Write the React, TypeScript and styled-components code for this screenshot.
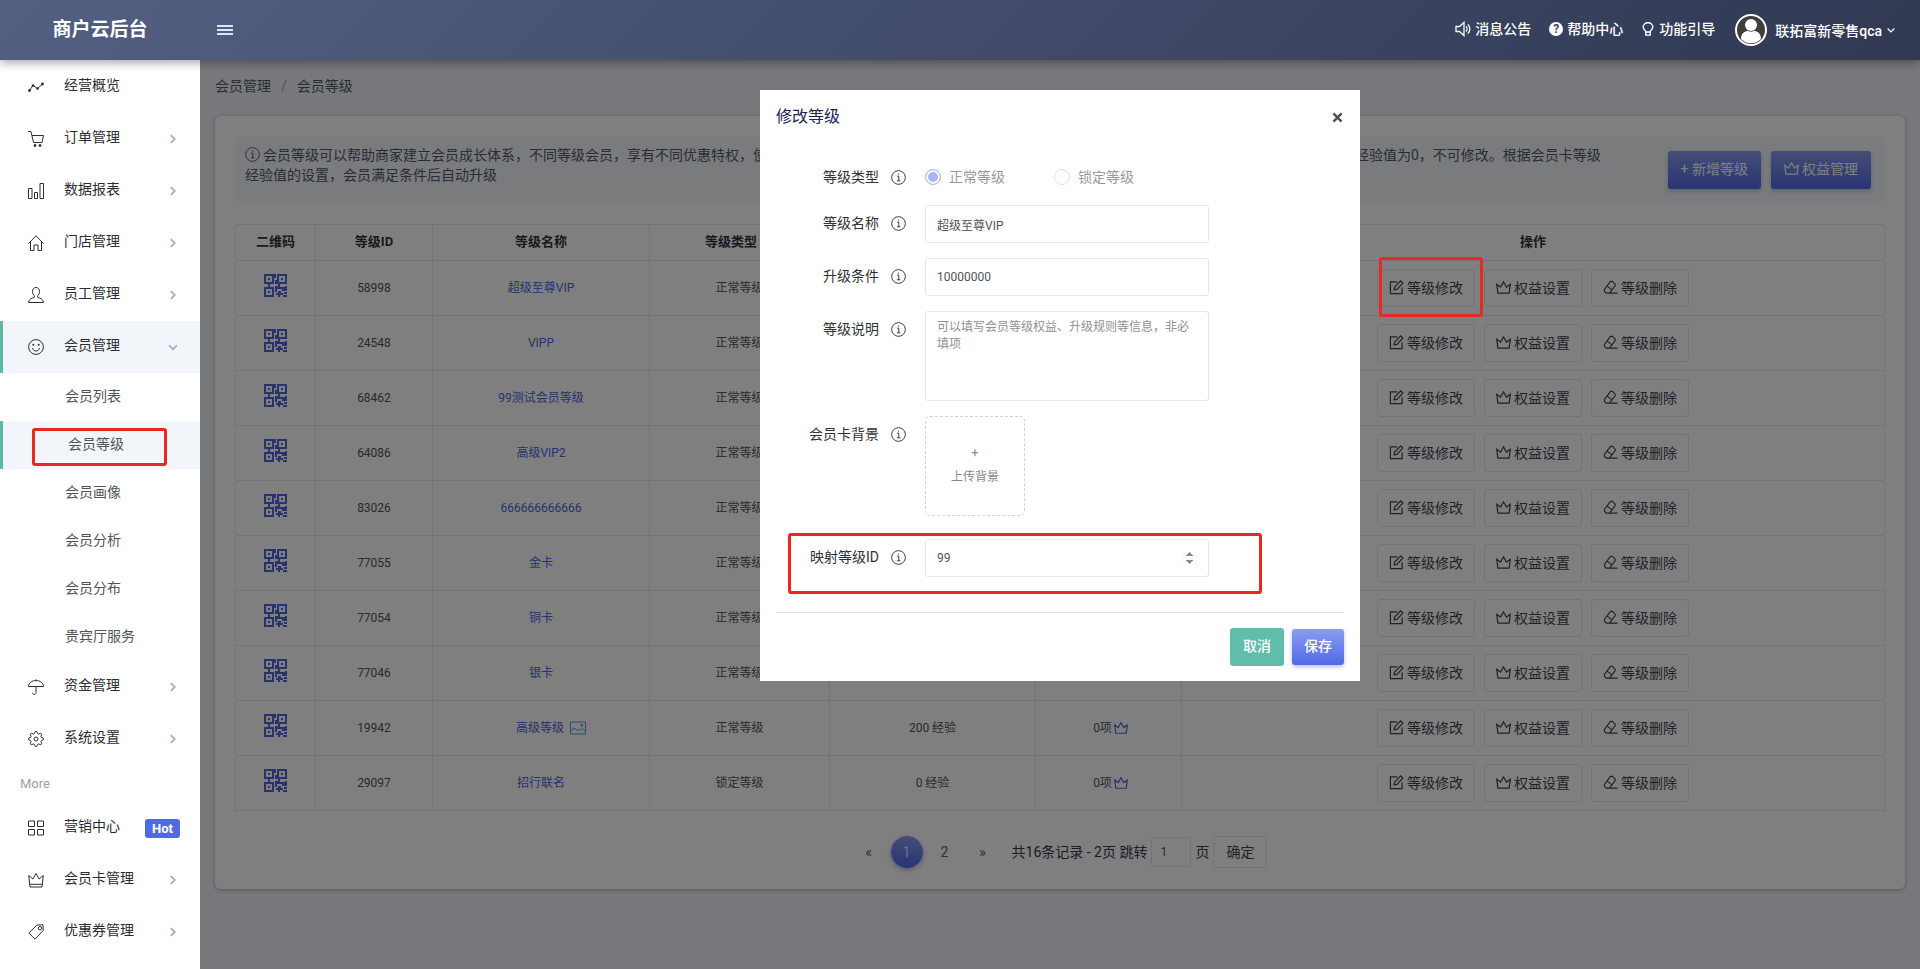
import React from 'react';
import styled, { createGlobalStyle, css } from 'styled-components';

const GlobalStyle = createGlobalStyle`
  *, *::before, *::after { box-sizing: border-box; }
  body {
    margin: 0;
    background: #eff0f6;
    color: #303e50;
    font: 14px/20px Roboto, "Noto Sans CJK SC", sans-serif;
  }
  button, input, textarea { font-family: inherit; }
  a { color: inherit; text-decoration: none; }
  ul { list-style: none; margin: 0; padding: 0; }
`;

/* ---------- icons ---------- */

const Svg = styled.svg`
  display: block;
  flex: none;
  fill: none;
  stroke: currentColor;
`;

/* Cog outline with eight teeth around the centre of a 16 x 16 box. */
const cogPoints = Array.from({ length: 32 }, (_, i) => {
  const angle = ((i - 0.5) * Math.PI) / 16;
  const radius = i % 4 < 2 ? 7.5 : 5.6;
  return `${(8 + radius * Math.sin(angle)).toFixed(2)},${(8 - radius * Math.cos(angle)).toFixed(2)}`;
}).join(' ');

const shapes: Record<string, React.ReactNode> = {
  trend: (
    <>
      <path d="M1.500 11.500 5 6.500l4.500 3L14.500 5" />
      <g fill="currentColor" stroke="none">
        <circle cx="1.500" cy="11.500" r="1.400" />
        <circle cx="5" cy="6.500" r="1.300" />
        <circle cx="9.500" cy="9.500" r="1.300" />
        <circle cx="14.500" cy="5" r="1.400" />
      </g>
    </>
  ),
  cart: (
    <>
      <path d="M0 .5h3l2.500 11h8.500L15.500 4.500H4" />
      <circle cx="7" cy="14.500" r="1" fill="currentColor" />
      <circle cx="12" cy="14.500" r="1" fill="currentColor" />
    </>
  ),
  bars: <path d="M.5 5.500h3.500v10H.5zM6.500 9.500h3v6h-3zM12 .5h3.500v15H12z" />,
  home: <path d="M.5 8.500 8 .8l7.500 7.700M2.500 6.800v8.700h3.500v-5.500h4v5.500h3.500V6.800" />,
  user: (
    <path d="M8 .5C5.600.500 4.500 2.300 4.500 4.500c0 2 .8 3.300 1.800 4.200v1.600C4 11.300.8 12 .5 15.500h15c-.3-3.500-3.500-4.200-5.800-5.200V8.700c1-.9 1.800-2.200 1.800-4.200C11.500 2.300 10.400.5 8 .5z" />
  ),
  smile: (
    <>
      <circle cx="8" cy="8" r="7.400" />
      <path d="M4.500 9c.5 2 1.800 3 3.500 3s3-1 3.500-3" />
      <circle cx="5.300" cy="5.800" r=".6" fill="currentColor" />
      <circle cx="10.700" cy="5.800" r=".6" fill="currentColor" />
    </>
  ),
  umbrella: (
    <path d="M8 .3v1.200M.5 7.500C.5 4 4 1.500 8 1.500s7.500 2.500 7.500 6H.5zM8 7.500v6c0 2.600-3.500 2.600-3.500.3" />
  ),
  gear: (
    <>
      <circle cx="8" cy="8" r="2" />
      <polygon points={cogPoints} />
    </>
  ),
  grid: <path d="M.5 1h6v5.500h-6zM9.500 1h6v5.500h-6zM.5 9.500h6V15h-6zM9.500 9.500h6V15h-6z" />,
  crown: <path d="M.7 3.500 2 15h12l1.300-11.500L11 7 8 1.500 5 7zM2 12.300h12" />,
  simpleCrown: <path d="M.8 4.500 2 14h12l1.200-9.500-4 3L8 2 4.800 7.500z" />,
  tag: (
    <>
      <path d="M9 1 15 .8 15.200 6.500 7 15.200.8 9z" />
      <circle cx="12" cy="4.200" r="1.700" />
    </>
  ),
  speaker: (
    <>
      <path d="M1 5.500v5h3.500L9 14.500v-13L4.500 5.500z" />
      <path d="M11 5.500c1.300 1.300 1.300 3.700 0 5M12.800 3.500c2.800 2.500 2.800 6.500 0 9" />
    </>
  ),
  bulb: <path d="M5.500 11.500C5.500 9.500 2.500 8.800 2.500 5.800a5.500 5 0 0 1 11 0c0 3-3 3.700-3 5.700zM5.500 11.500v3.500h5v-3.500" />,
  info: (
    <>
      <circle cx="8" cy="8" r="7.300" />
      <path d="M6.500 6.500H8.300v5M6.300 11.500h3.700" />
      <circle cx="8" cy="4.300" r=".7" fill="currentColor" stroke="none" />
    </>
  ),
  edit: <path d="M9 2H1.500v12.500H14V8M5.500 10.500l.5-3L12.500 1l2.300 2.200L8.500 10z" />,
  eraser: <path d="M5 14h10.500M8 14H3.500L1.500 12V10L8 1.500h2L13 4.500V6L7 14M4.500 6.500l5 4" />,
  picture: <path d="M.5 2h15v12H.5zM.5 11 4 8l3 2.500 2-1.500M9 11l3-2.500 3.500 3M11 4.500h1.500V6H11z" />,
  right: <path d="M5.500 3.500 10 8l-4.500 4.500" />,
  down: <path d="M3.500 6 8 10.500 12.500 6" />,
  menu: <path d="M0 4h16M0 8h16M0 12h16" />,
  close: <path d="M3 3l10 10M13 3 3 13" />,
};

const Icon = ({ name, size = 16, weight = 1 }: { name: string; size?: number; weight?: number }) => (
  <Svg viewBox="0 0 16 16" width={size} height={size} strokeWidth={weight} aria-hidden>
    {shapes[name]}
  </Svg>
);

const qrCells =
  'M0 0h10v10H0zM2 2v6h6V2zM4 4h2v2H4zM13 0h10v10H13zM15 2v6h6V2zM17 4h2v2h-2zM0 13h10v10H0zM2 15v6h6v-6zM4 17h2v2H4z' +
  'M10 0h2v4h-2zM11 6h2v4h-2zM4 10h2v3H4zM11 12h3v-2h2v3h5v-1h2v5h-5v-2h-5v3h-2zM14 17h3v2h2v2h-3v2h-2v-2h-2v-2h2zM20 18h3v2h-3zM19 21h4v2h-4z';

const QrIcon = () => (
  <svg viewBox="0 0 23 23" width={23} height={23} fill="currentColor" fillRule="evenodd" aria-hidden>
    <path d={qrCells} />
  </svg>
);

/* ---------- top bar ---------- */

const TopBar = styled.header`
  position: sticky;
  top: 0;
  z-index: 50;
  display: flex;
  align-items: center;
  height: 60px;
  padding-right: 23px;
  color: #fff;
  background: linear-gradient(135deg, #536082, #303852);
  box-shadow: 0 2px 10px rgba(0, 0, 0, 0.4);
`;

const Brand = styled.a`
  width: 200px;
  font-size: 19px;
  font-weight: 700;
  text-align: center;
`;

const PlainButton = styled.button`
  display: flex;
  padding: 0;
  border: 0;
  color: inherit;
  background: none;
  cursor: pointer;
`;

const MenuToggle = styled(PlainButton)`
  margin: 0 auto 0 17px;
  color: #dfe4f2;
`;

const TopLink = styled.a`
  display: flex;
  align-items: center;
  gap: 4px;
  margin-right: 18px;
  padding-bottom: 2px;
  font-weight: 500;
`;

const HelpDot = styled.span`
  width: 14px;
  height: 14px;
  border-radius: 50%;
  color: #3a4560;
  background: #fff;
  font-size: 12px;
  font-weight: 700;
  line-height: 14px;
  text-align: center;
`;

const Account = styled(PlainButton)`
  align-items: center;
  gap: 8px;
  margin-left: 2px;
  font-size: 14px;
  font-weight: 500;
`;

const AccountName = styled.span`
  display: flex;
  align-items: center;
  gap: 3px;
`;

const Avatar = () => (
  <svg width="32" height="32" viewBox="0 0 32 32" aria-hidden>
    <circle cx="16" cy="16" r="15" fill="#413d3b" stroke="#fff" strokeWidth="2" />
    <circle cx="16" cy="11" r="6" fill="#fff" />
    <path d="M6 25c0-6 4-8 7-8 2 1 4 1 6 0 3 0 7 2 7 8a14 14 0 0 1-20 0z" fill="#fff" />
  </svg>
);

/* ---------- side menu ---------- */

const Shell = styled.div`
  display: flex;
  min-height: calc(100vh - 60px);
`;

const Sidebar = styled.nav`
  flex: none;
  width: 200px;
  padding-top: 1px;
  background: #fff;
`;

const marker = css`
  background: #f2f6fa;
  border-left-color: #60b9a8;
`;

const MenuLink = styled.a<{ $open?: boolean }>`
  display: flex;
  align-items: center;
  height: 52px;
  padding: 0 20px 0 25px;
  border-left: 3px solid transparent;
  color: #2c2e33;
  ${(p) => p.$open && marker}
`;

const MenuText = styled.span`
  flex: 1;
  margin-left: 20px;
  padding-bottom: 4px;
`;

const MenuArrow = styled.span`
  color: #a6abb3;
`;

const Badge = styled.span`
  padding: 0 7px;
  border-radius: 3px;
  color: #fff;
  background: #506ae4;
  font-size: 13px;
  font-weight: 700;
  line-height: 19px;
`;

const SubItem = styled.li`
  position: relative;
`;

const SubLink = styled.a<{ $current?: boolean }>`
  display: block;
  padding: 0 0 2px 62px;
  border-left: 3px solid transparent;
  color: #50545c;
  line-height: 46px;
  ${(p) => p.$current && marker}
  ${(p) => p.$current && 'padding-left: 65px;'}
`;

const MenuCaption = styled.div`
  padding-left: 20px;
  color: #98a2ac;
  font-size: 13px;
  line-height: 37px;
`;

/* Red frame drawn around the step the reader should follow. */
const Marker = styled.span<{ $inset: string }>`
  position: absolute;
  inset: ${(p) => p.$inset};
  z-index: 30;
  border: 3px solid #e8291f;
  border-radius: 3px;
  pointer-events: none;
`;

/* ---------- page ---------- */

const Main = styled.main`
  position: relative;
  flex: 1;
  min-width: 0;
  padding: 16px 15px;
`;

const Crumbs = styled.nav`
  display: flex;
  gap: 10px;
  margin-bottom: 20px;
  color: #525a66;

  span { color: #a5abb5; }
`;

const Card = styled.section`
  padding: 20px;
  border-radius: 6px;
  background: #fff;
  box-shadow: 0 1px 4px rgba(30, 40, 80, 0.3);
`;

const Notice = styled.div`
  display: flex;
  align-items: flex-start;
  justify-content: space-between;
  gap: 56px;
  margin-bottom: 21px;
  padding: 9px 14px 14px 10px;
  border-radius: 5px;
  background: #f3f6f9;
`;

const NoticeText = styled.p`
  margin: 0 0 4px;
  color: #55596a;

  svg {
    display: inline-block;
    margin-right: 3px;
    vertical-align: -2px;
  }
`;

const NoticeActions = styled.div`
  display: flex;
  flex: none;
  gap: 10px;
  height: 44px;
  padding-top: 6px;
`;

const PrimaryButton = styled.button`
  display: flex;
  align-items: center;
  justify-content: center;
  gap: 3px;
  height: 38px;
  padding: 0 12px 4px;
  border: 0;
  border-radius: 3px;
  color: #fff;
  background: linear-gradient(#8a9bf0, #506ae4);
  box-shadow: 0 2px 4px rgba(80, 106, 228, 0.4);
  font-size: 14px;
  white-space: nowrap;

  ${NoticeActions} & { padding: 0 13px 4px; }
`;

const Table = styled.table`
  width: 100%;
  border-collapse: collapse;
  table-layout: fixed;
  color: #50545a;
  font-size: 12px;
  text-align: center;

  th, td {
    padding: 0;
    border: 1px solid #e6e9ee;
  }
  th {
    height: 36px;
    padding-bottom: 2px;
    color: #303440;
    font-size: 13px;
    font-weight: 700;
  }
  td { height: 55px; }
`;

const HeadCell = styled.span`
  display: inline-flex;
  align-items: center;
  gap: 3px;
`;

const CellLink = styled.a<{ $withPicture?: boolean }>`
  display: inline-flex;
  align-items: center;
  gap: 6px;
  padding-left: ${(p) => (p.$withPicture ? 20 : 0)}px;
  color: #5064d8;

  span + svg { color: #4f9fd0; }
`;

const Perks = styled.span`
  display: inline-flex;
  align-items: center;
  gap: 2px;
  padding-left: 4px;

  svg { color: #5064d8; }
`;

const Actions = styled.div`
  display: flex;
  justify-content: center;
  gap: 9px;
`;

const ActionSlot = styled.div`
  position: relative;
`;

const OutlineButton = styled.button<{ $wide?: boolean }>`
  display: flex;
  align-items: center;
  justify-content: center;
  gap: 3px;
  width: ${(p) => (p.$wide ? 98 : 54)}px;
  height: ${(p) => (p.$wide ? 38 : 32)}px;
  padding: 0 0 2px;
  border: 1px solid #e4e7ef;
  border-radius: 3px;
  color: #42454f;
  background: transparent;
  font-size: 14px;
`;

const Pager = styled.div`
  display: flex;
  align-items: center;
  justify-content: center;
  gap: 4px;
  margin: 25px 0 1px;
  color: #30384c;
`;

const PageLink = styled.a<{ $current?: boolean }>`
  width: 32px;
  margin-right: 2px;
  border-radius: 50%;
  color: #585c66;
  line-height: 32px;
  text-align: center;
  ${(p) =>
    p.$current &&
    css`
      color: #dfe4ff;
      background: linear-gradient(#8a9bf0, #506ae4);
      box-shadow: 0 2px 5px rgba(80, 106, 228, 0.5);
    `}
`;

const PagerLabel = styled.label`
  display: flex;
  align-items: center;
  gap: 4px;
  margin-left: 7px;
`;

const PageInput = styled.input`
  width: 40px;
  height: 30px;
  padding: 0 8px;
  border: 1px solid #e4e7ef;
  border-radius: 3px;
  color: #555;
  background: transparent;
  font-size: 12px;
`;

/* ---------- dialog ---------- */

const Backdrop = styled.div`
  position: absolute;
  inset: 0;
  z-index: 10;
  display: flex;
  align-items: flex-start;
  justify-content: center;
  padding-top: 30px;
  background: rgba(0, 0, 0, 0.5);
`;

const Dialog = styled.form`
  width: 600px;
  padding: 17px 16px 15px;
  background: #fff;
`;

const DialogHead = styled.div`
  display: flex;
  align-items: center;
  justify-content: space-between;
  margin-bottom: 32px;
`;

const DialogTitle = styled.h2`
  margin: 0;
  color: #1c2454;
  font-size: 16px;
  font-weight: 400;
  line-height: 20px;
`;

const DialogClose = styled(PlainButton)`
  color: #505050;
`;

const Field = styled.div<{ $gap?: number }>`
  position: relative;
  display: grid;
  grid-template-columns: 130px auto;
  justify-content: start;
  column-gap: 19px;
  margin-bottom: ${(p) => p.$gap ?? 15}px;
`;

const FieldLabel = styled.label`
  display: flex;
  align-items: center;
  justify-content: flex-end;
  gap: 12px;
  height: 38px;
  padding-bottom: 2px;
  color: #303236;
`;

const Radios = styled.div`
  display: flex;
  align-items: center;
  gap: 49px;
  padding-bottom: 2px;
`;

const RadioLabel = styled.label`
  display: flex;
  align-items: center;
  gap: 8px;
  color: #999;
`;

const Radio = styled.input`
  appearance: none;
  width: 16px;
  height: 16px;
  margin: 0;
  border: 1px solid #dee0e4;
  border-radius: 50%;

  &:checked {
    border-color: #a9b6f2;
    background: #a9b6f2;
    box-shadow: inset 0 0 0 2px #fff;
  }
`;

const fieldBox = css`
  width: 284px;
  padding: 0 11px;
  border: 1px solid #e4e6ee;
  border-radius: 3px;
  color: #505358;
  background: #fff;
  font-size: 12px;
`;

const TextInput = styled.input`
  ${fieldBox}
  height: 38px;

  &::-webkit-inner-spin-button { opacity: 1; }
`;

const TextArea = styled.textarea`
  ${fieldBox}
  display: block;
  height: 90px;
  padding: 7px 11px;
  line-height: 17px;
  resize: none;

  &::placeholder { color: #8e9196; }
`;

const Upload = styled.button`
  display: flex;
  flex-direction: column;
  align-items: center;
  justify-content: center;
  gap: 4px;
  width: 100px;
  height: 100px;
  padding: 0 0 2px;
  border: 1px dashed #d0d3d8;
  border-radius: 5px;
  color: #858890;
  background: #fff;
  font-size: 12px;
  line-height: 20px;
`;

const DialogFoot = styled.div`
  display: flex;
  align-items: center;
  justify-content: flex-end;
  gap: 8px;
  padding-top: 15px;
  border-top: 1px solid #dcdfe4;
`;

const CancelButton = styled.button`
  width: 54px;
  height: 38px;
  padding: 0 0 4px;
  border: 0;
  border-radius: 3px;
  color: #fff;
  background: #60bda9;
  font-size: 14px;
  font-weight: 500;
`;

const SaveButton = styled(PrimaryButton)`
  height: 36px;
  font-weight: 500;
`;

/* ---------- data ---------- */

const topMenu = [
  ['trend', '经营概览'],
  ['cart', '订单管理'],
  ['bars', '数据报表'],
  ['home', '门店管理'],
  ['user', '员工管理'],
];
const subMenu = ['会员列表', '会员等级', '会员画像', '会员分析', '会员分布', '贵宾厅服务'];
const moreMenu = [
  ['grid', '营销中心'],
  ['crown', '会员卡管理'],
  ['tag', '优惠券管理'],
];

const columns: { title: string; width: string; hint?: boolean }[] = [
  { title: '二维码', width: '80px' },
  { title: '等级ID', width: '117px' },
  { title: '等级名称', width: '217px' },
  { title: '等级类型', width: '180px', hint: true },
  { title: '升级条件', width: '206px' },
  { title: '等级权益', width: '146px' },
  { title: '操作', width: 'auto' },
];

const levels: { id: string; name: string; type: string; exp: string; picture?: boolean }[] = [
  { id: '58998', name: '超级至尊VIP', type: '正常等级', exp: '10000000' },
  { id: '24548', name: 'VIPP', type: '正常等级', exp: '1000000' },
  { id: '68462', name: '99测试会员等级', type: '正常等级', exp: '100000' },
  { id: '64086', name: '高级VIP2', type: '正常等级', exp: '50000' },
  { id: '83026', name: '666666666666', type: '正常等级', exp: '10000' },
  { id: '77055', name: '金卡', type: '正常等级', exp: '5000' },
  { id: '77054', name: '铜卡', type: '正常等级', exp: '1000' },
  { id: '77046', name: '银卡', type: '正常等级', exp: '500' },
  { id: '19942', name: '高级等级', type: '正常等级', exp: '200', picture: true },
  { id: '29097', name: '招行联名', type: '锁定等级', exp: '0' },
];

const MenuEntry = ({ icon, text, arrow = 'right', open, badge }: {
  icon: string; text: string; arrow?: string; open?: boolean; badge?: string;
}) => (
  <li>
    <MenuLink href="#" $open={open}>
      <Icon name={icon} />
      <MenuText>{text}</MenuText>
      {badge && <Badge>{badge}</Badge>}
      {arrow && <MenuArrow><Icon name={arrow} size={14} weight={2} /></MenuArrow>}
    </MenuLink>
  </li>
);

const HintLabel = ({ text, htmlFor }: { text: string; htmlFor?: string }) => (
  <FieldLabel htmlFor={htmlFor}>
    {text}
    <Icon name="info" size={15} />
  </FieldLabel>
);

const SideMenu = () => (
  <Sidebar>
    <ul>
      {topMenu.map(([icon, text]) => (
        <MenuEntry key={text} icon={icon} text={text} arrow={icon === 'trend' ? '' : 'right'} />
      ))}
      <MenuEntry icon="smile" text="会员管理" arrow="down" open />
      {subMenu.map((text) => {
        const current = text === '会员等级';
        return (
          <SubItem key={text}>
            <SubLink href="#" $current={current}>{text}</SubLink>
            {current && <Marker $inset="7px 33px 3px 32px" />}
          </SubItem>
        );
      })}
      <MenuEntry icon="umbrella" text="资金管理" />
      <MenuEntry icon="gear" text="系统设置" />
    </ul>
    <MenuCaption>More</MenuCaption>
    <ul>
      {moreMenu.map(([icon, text]) => (
        <MenuEntry
          key={text}
          icon={icon}
          text={text}
          arrow={icon === 'grid' ? '' : 'right'}
          badge={icon === 'grid' ? 'Hot' : undefined}
        />
      ))}
    </ul>
  </Sidebar>
);

const LevelTable = () => (
  <Table>
    <colgroup>
      {columns.map(({ title, width }) => <col key={title} style={{ width }} />)}
    </colgroup>
    <thead>
      <tr>
        {columns.map(({ title, hint }) => (
          <th key={title} scope="col">
            <HeadCell>{title}{hint && <Icon name="info" size={14} />}</HeadCell>
          </th>
        ))}
      </tr>
    </thead>
    <tbody>
      {levels.map((level, index) => (
        <tr key={level.id}>
          <td><CellLink href="#" aria-label="二维码"><QrIcon /></CellLink></td>
          <td>{level.id}</td>
          <td>
            <CellLink href="#" $withPicture={level.picture}>
              <span>{level.name}</span>
              {level.picture && <Icon name="picture" />}
            </CellLink>
          </td>
          <td>{level.type}</td>
          <td>{level.exp} 经验</td>
          <td><Perks>0项<Icon name="simpleCrown" size={14} weight={1.3} /></Perks></td>
          <td>
            <Actions>
              <ActionSlot>
                <OutlineButton $wide><Icon name="edit" size={15} weight={1.3} />等级修改</OutlineButton>
                {index === 0 && <Marker $inset="-12px -8px -10px 2px" />}
              </ActionSlot>
              <OutlineButton $wide><Icon name="simpleCrown" size={15} weight={1.3} />权益设置</OutlineButton>
              <OutlineButton $wide><Icon name="eraser" size={15} weight={1.2} />等级删除</OutlineButton>
            </Actions>
          </td>
        </tr>
      ))}
    </tbody>
  </Table>
);

const EditDialog = () => (
  <Dialog role="dialog" aria-labelledby="dialog-title">
    <DialogHead>
      <DialogTitle id="dialog-title">修改等级</DialogTitle>
      <DialogClose type="button" aria-label="关闭"><Icon name="close" size={13} weight={3} /></DialogClose>
    </DialogHead>
    <Field $gap={8}>
      <HintLabel text="等级类型" />
      <Radios>
        <RadioLabel><Radio type="radio" name="kind" defaultChecked disabled />正常等级</RadioLabel>
        <RadioLabel><Radio type="radio" name="kind" disabled />锁定等级</RadioLabel>
      </Radios>
    </Field>
    <Field>
      <HintLabel text="等级名称" htmlFor="name" />
      <TextInput id="name" defaultValue="超级至尊VIP" />
    </Field>
    <Field>
      <HintLabel text="升级条件" htmlFor="exp" />
      <TextInput id="exp" defaultValue="10000000" />
    </Field>
    <Field>
      <HintLabel text="等级说明" htmlFor="note" />
      <TextArea id="note" placeholder="可以填写会员等级权益、升级规则等信息，非必填项" />
    </Field>
    <Field $gap={23}>
      <HintLabel text="会员卡背景" htmlFor="cover" />
      <Upload id="cover" type="button"><span>+</span><span>上传背景</span></Upload>
    </Field>
    <Field $gap={35}>
      <HintLabel text="映射等级ID" htmlFor="map" />
      <TextInput id="map" type="number" defaultValue="99" />
      <Marker $inset="-6px 82px -17px 12px" />
    </Field>
    <DialogFoot>
      <CancelButton type="button">取消</CancelButton>
      <SaveButton type="button">保存</SaveButton>
    </DialogFoot>
  </Dialog>
);

export default function App() {
  return (
    <>
      <GlobalStyle />
      <TopBar>
        <Brand href="#">商户云后台</Brand>
        <MenuToggle aria-label="菜单"><Icon name="menu" weight={2} /></MenuToggle>
        <TopLink href="#"><Icon name="speaker" weight={1.3} />消息公告</TopLink>
        <TopLink href="#"><HelpDot>?</HelpDot>帮助中心</TopLink>
        <TopLink href="#"><Icon name="bulb" size={14} weight={1.6} />功能引导</TopLink>
        <Account>
          <Avatar />
          <AccountName>联拓富新零售qca<Icon name="down" size={12} weight={1.6} /></AccountName>
        </Account>
      </TopBar>
      <Shell>
        <SideMenu />
        <Main>
          <Crumbs aria-label="breadcrumb">
            <a href="#">会员管理</a>
            <span>/</span>
            <a href="#">会员等级</a>
          </Crumbs>
          <Card>
            <Notice>
              <NoticeText>
                <Icon name="info" size={15} />
                会员等级可以帮助商家建立会员成长体系，不同等级会员，享有不同优惠特权，使用会员等级可以有效提升会员的活跃度和品牌忠诚度。系统默认的初始会员等级为最低等级，其经验值为0，不可修改。根据会员卡等级经验值的设置，会员满足条件后自动升级
              </NoticeText>
              <NoticeActions>
                <PrimaryButton>+ 新增等级</PrimaryButton>
                <PrimaryButton><Icon name="simpleCrown" size={15} weight={1.3} />权益管理</PrimaryButton>
              </NoticeActions>
            </Notice>
            <LevelTable />
            <Pager>
              <PageLink href="#">«</PageLink>
              <PageLink href="#" $current>1</PageLink>
              <PageLink href="#">2</PageLink>
              <PageLink href="#">»</PageLink>
              <PagerLabel>
                共16条记录 - 2页 跳转
                <PageInput defaultValue="1" />
                页
              </PagerLabel>
              <OutlineButton>确定</OutlineButton>
            </Pager>
          </Card>
          <Backdrop>
            <EditDialog />
          </Backdrop>
        </Main>
      </Shell>
    </>
  );
}
